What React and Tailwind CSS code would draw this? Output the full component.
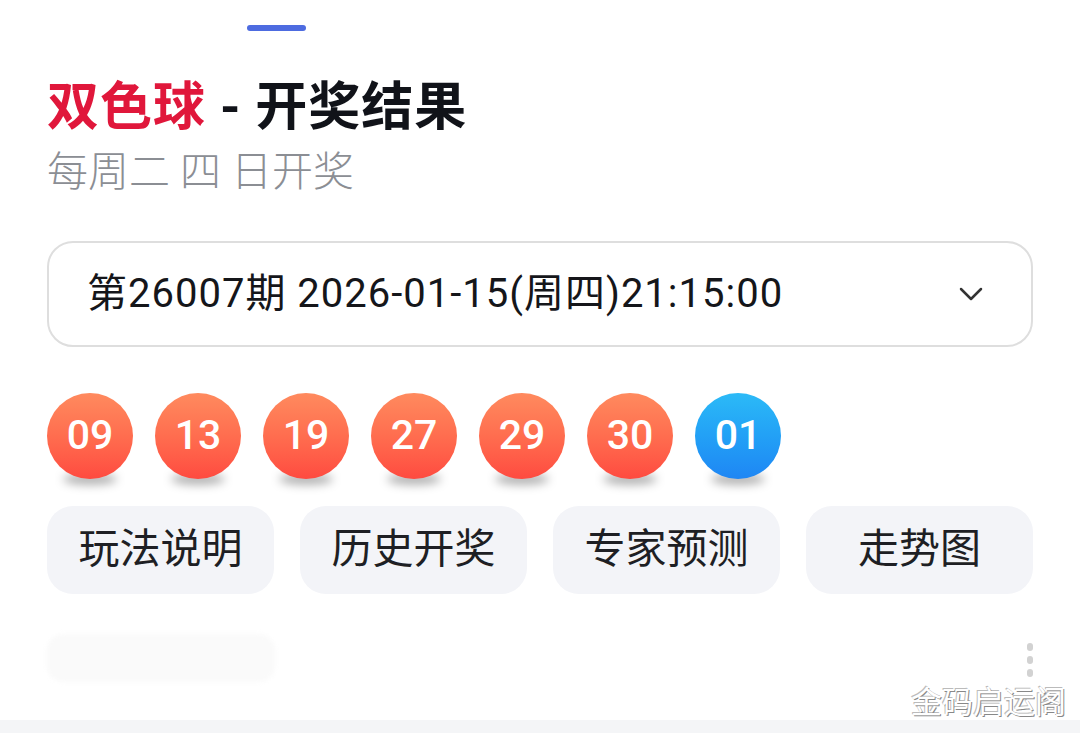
import { ChevronDown } from 'lucide-react'

const red = ['09', '13', '19', '27', '29', '30']
const blue = ['01']
const actions = ['玩法说明', '历史开奖', '专家预测', '走势图']
const tabs = [
  { name: '推荐', x: 'w-[120px] text-[#333]' },
  { name: '双色球', x: 'w-[160px]' },
  { name: '大乐透', x: 'w-[200px]' },
  { name: '福彩3D', x: 'w-[190px]' },
  { name: '排列三', x: 'w-[180px]' },
]

function Ball({ num, color }) {
  return (
    <div className="relative h-[86px] w-[86px] shrink-0">
      <div className="absolute left-[16px] right-[16px] top-[80px] h-[12px] rounded-[50%] bg-black/30 blur-[5px]" />
      <div
        className={
          color === 'blue'
            ? 'relative flex h-full w-full items-center justify-center rounded-full bg-gradient-to-b from-[#2cbaf7] to-[#1f86f4] text-[41px] font-medium text-white'
            : 'relative flex h-full w-full items-center justify-center rounded-full bg-gradient-to-b from-[#ff8a5e] to-[#fe4a40] text-[41px] font-medium text-white'
        }
      >
        {num}
      </div>
    </div>
  )
}

export default function App() {
  return (
    <div className="h-[741px] w-[1080px] overflow-hidden bg-white font-['Roboto','Noto_Sans_CJK_SC',sans-serif]">
      {/* tab bar, mostly scrolled off the top */}
      <div className="relative h-[33px] overflow-hidden">
        <div className="-mt-[36px] flex pl-[240px] text-[34px] leading-[34px] text-[#c4c4c4]">
          {tabs.map((t) => (
            <div key={t.name} className={t.x}>{t.name}</div>
          ))}
        </div>
        <div className="absolute left-[247px] top-[25px] h-[6px] w-[59px] rounded-full bg-[#4d6be0]" />
      </div>

      <div className="px-[47px]">
        <h1 className="mt-[42px] text-[52px] font-bold leading-[66px] tracking-[1px] text-[#111319]">
          <span className="text-[#e0173b]">双色球</span> - 开奖结果
        </h1>
        <p className="mt-[6px] text-[41px] font-light leading-[50px] text-[#8b8e94]">每周二 四 日开奖</p>

        <div className="mt-[44px] flex h-[106px] items-center justify-between rounded-[26px] border-2 border-[#dedede] pl-[38px] pr-[40px]">
          <span className="text-[40px] tracking-[1px] text-[#15161a]">第26007期 2026-01-15(周四)21:15:00</span>
          <ChevronDown className="h-[40px] w-[40px] text-[#333]" strokeWidth={1.5} />
        </div>

        <div className="mt-[46px] flex gap-[22px]">
          {red.map((n) => (
            <Ball key={n} num={n} color="red" />
          ))}
          {blue.map((n) => (
            <Ball key={'b' + n} num={n} color="blue" />
          ))}
        </div>

        <div className="mt-[27px] grid grid-cols-4 gap-[26px]">
          {actions.map((a) => (
            <div
              key={a}
              className="flex h-[88px] items-center justify-center rounded-[26px] bg-[#f3f4f8] text-[41px] text-[#1e1f24]"
            >
              {a}
            </div>
          ))}
        </div>

        <div className="mt-[40px] flex h-[86px] items-start justify-between">
          <div className="h-[48px] w-[228px] rounded-[16px] bg-[#fafafa] blur-[2px]" />
          <div className="mt-[9px] flex flex-col gap-[5px]">
            <span className="h-[8px] w-[6px] rounded-full bg-[#d2d2d2]" />
            <span className="h-[8px] w-[6px] rounded-full bg-[#d2d2d2]" />
            <span className="h-[8px] w-[6px] rounded-full bg-[#d2d2d2]" />
          </div>
        </div>
      </div>

      <div className="relative h-[13px] bg-[#f4f5f7]">
        <span className="absolute -top-[34px] right-[14px] text-[31px] leading-[34px] text-white [text-shadow:1px_1px_0_#888,-1px_-1px_0_#bbb]">
          金码启运阁
        </span>
      </div>
    </div>
  )
}
